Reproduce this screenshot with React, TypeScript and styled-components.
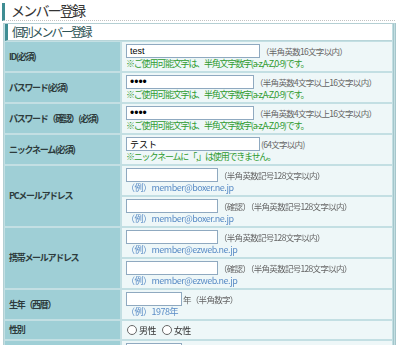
import React from 'react';
import styled, { createGlobalStyle } from 'styled-components';

const GlobalStyle = createGlobalStyle`
  body {
    margin: 0;
    background: #fff;
    font-family: "Noto Sans CJK JP", "Liberation Sans", sans-serif;
  }
`;

type Sub = {
  input?: { type?: string; value?: string; width: number; autoFocus?: boolean };
  after?: string;
  note?: string;
  example?: string;
  radio?: string[];
};

type Row = { label: string; subs: Sub[] };

const rows: Row[] = [
  {
    label: 'ID(必須)',
    subs: [
      {
        input: { value: 'test', width: 134 },
        after: '（半角英数16文字以内）',
        note: '※ご使用可能文字は、半角文字数字(a-z,A-Z,0-9)です。',
      },
    ],
  },
  {
    label: 'パスワード(必須)',
    subs: [
      {
        input: { type: 'password', value: 'test', width: 128 },
        after: '（半角英数4文字以上16文字以内）',
        note: '※ご使用可能文字は、半角文字数字(a-z,A-Z,0-9)です。',
      },
    ],
  },
  {
    label: 'パスワード（確認）(必須)',
    subs: [
      {
        input: { type: 'password', value: 'test', width: 128 },
        after: '（半角英数4文字以上16文字以内）',
        note: '※ご使用可能文字は、半角文字数字(a-z,A-Z,0-9)です。',
      },
    ],
  },
  {
    label: 'ニックネーム(必須)',
    subs: [
      {
        input: { value: 'テスト', width: 134 },
        after: '(64文字以内)',
        note: '※ニックネームに「,」は使用できません。',
      },
    ],
  },
  {
    label: 'PCメールアドレス',
    subs: [
      {
        input: { width: 92, autoFocus: true },
        after: '（半角英数記号128文字以内）',
        example: '（例）member@boxer.ne.jp',
      },
      {
        input: { width: 92 },
        after: '（確認）（半角英数記号128文字以内）',
        example: '（例）member@boxer.ne.jp',
      },
    ],
  },
  {
    label: '携帯メールアドレス',
    subs: [
      {
        input: { width: 92 },
        after: '（半角英数記号128文字以内）',
        example: '（例）member@ezweb.ne.jp',
      },
      {
        input: { width: 92 },
        after: '（確認）（半角英数記号128文字以内）',
        example: '（例）member@ezweb.ne.jp',
      },
    ],
  },
  {
    label: '生年（西暦）',
    subs: [
      {
        input: { width: 56 },
        after: ' 年（半角数字）',
        example: '（例）1978年',
      },
    ],
  },
  {
    label: '性別',
    subs: [{ radio: ['男性', '女性'] }],
  },
  {
    // next row, only its input's top edge is in view
    label: '',
    subs: [{ input: { width: 56 } }],
  },
];

const App = () => {
  return (
    <>
      <GlobalStyle />
      <Page>
        <PageTitle>メンバー登録</PageTitle>
        <Panel>
          <PanelHead>個別メンバー登録</PanelHead>
          <Table>
            {rows.map((row, n) => (
              <FormRow key={n}>
                <Label>{row.label}</Label>
                <Values>
                  {row.subs.map((sub, i) => (
                    <Cell key={i} $compact={!!sub.radio}>
                      {sub.input && (
                        <Line>
                          <Field
                            type={sub.input.type || 'text'}
                            defaultValue={sub.input.value}
                            autoFocus={sub.input.autoFocus}
                            $width={sub.input.width}
                            $secret={sub.input.type === 'password'}
                          />
                          {sub.after && <After>{sub.after}</After>}
                        </Line>
                      )}
                      {sub.note && <Note>{sub.note}</Note>}
                      {sub.example && <Example>{sub.example}</Example>}
                      {sub.radio && (
                        <Line>
                          {sub.radio.map((r) => (
                            <RadioLabel key={r}>
                              <Radio type="radio" name={row.label} />
                              {r}
                            </RadioLabel>
                          ))}
                        </Line>
                      )}
                    </Cell>
                  ))}
                </Values>
              </FormRow>
            ))}
          </Table>
        </Panel>
      </Page>
    </>
  );
};

export default App;

const Page = styled.div`
  width: 400px;
  height: 345px;
  overflow: hidden;
  padding: 3px 0 0 2px;
  box-sizing: border-box;
`;

const PageTitle = styled.h1`
  margin: 0 5px 0 0;
  padding: 0 0 2px 6px;
  height: 15px;
  line-height: 15px;
  font-size: 14px;
  font-weight: normal;
  letter-spacing: -1.8px;
  color: #333;
  border-left: 3px solid #3f8d93;
  border-bottom: 1px dotted #c2c2c2;
`;

const Panel = styled.div`
  margin: 2px 4px 0 1px;
  border: 1px solid #b4cfd3;
  border-right: 3px double #a5c6cb;
  background: #c3dfe3;
`;

const PanelHead = styled.div`
  background: #fff;
  margin: 0 1px;
  height: 16px;
  line-height: 16px;
  padding-left: 4px;
  border-left: 3px solid #3f8d93;
  font-size: 12px;
  letter-spacing: -2.2px;
  color: #2e5455;
  border-bottom: 1px solid #b8d5d9;
`;

const Table = styled.div`
  display: flex;
  flex-direction: column;
  gap: 2px;
  padding: 1px 1px 0 1px;
`;

const FormRow = styled.div`
  display: flex;
  gap: 2px;
`;

const Label = styled.div`
  width: 111px;
  flex: none;
  background: #9fcfd6;
  display: flex;
  align-items: center;
  padding-left: 4px;
  font-size: 9px;
  line-height: 12px;
  font-weight: bold;
  letter-spacing: -1.3px;
  color: #2d3b3c;
  white-space: nowrap;
`;

const Values = styled.div`
  flex: 1;
  display: flex;
  flex-direction: column;
  gap: 2px;
`;

const Cell = styled.div<{ $compact: boolean }>`
  background: #eef7f8;
  box-sizing: border-box;
  overflow: hidden;
  height: ${(p) => (p.$compact ? '18px' : '29px')};
  padding: ${(p) => (p.$compact ? '2px 4px 2px 5px' : '2px 4px 1px 4px')};
`;

const Line = styled.div`
  display: flex;
  align-items: center;
  height: 14px;
`;

const Field = styled.input<{ $width: number; $secret: boolean }>`
  width: ${(p) => p.$width}px;
  height: 14px;
  box-sizing: border-box;
  border: 1px solid #8fa9c0;
  padding: 0 3px;
  margin: 0;
  font-size: ${(p) => (p.$secret ? '12px' : '9px')};
  line-height: 12px;
  font-family: "Liberation Sans", "Noto Sans CJK JP", sans-serif;
  color: #000;
  background: #fff;
  outline: none;
  caret-color: #000;
`;

const After = styled.span`
  font-size: 8.5px;
  letter-spacing: -0.7px;
  color: #666;
  white-space: nowrap;
  margin-left: 1px;
`;

const Note = styled.div`
  font-size: 9px;
  line-height: 12px;
  letter-spacing: -1.2px;
  color: #2f9b2f;
  white-space: nowrap;
`;

const Example = styled.div`
  font-size: 9px;
  line-height: 12px;
  letter-spacing: -0.5px;
  color: #5a8cc6;
  white-space: nowrap;
`;

const RadioLabel = styled.label`
  display: flex;
  align-items: center;
  font-size: 9px;
  letter-spacing: -0.6px;
  color: #333;
  margin-right: 6px;
`;

const Radio = styled.input`
  appearance: none;
  width: 10px;
  height: 10px;
  border: 1px solid #666;
  border-radius: 50%;
  background: #fff;
  margin: 0 2px 0 0;
`;
